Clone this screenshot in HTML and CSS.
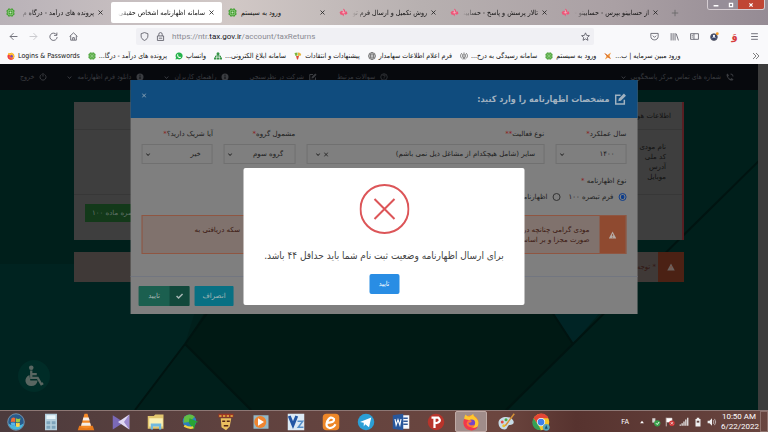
FILE: index.html
```html
<!DOCTYPE html>
<html lang="fa">
<head>
    <meta charset="UTF-8">
    <meta name="viewport" content="width=device-width, initial-scale=1.0">
    <title>سامانه اظهارنامه اشخاص حقیقی</title>
    <link rel="stylesheet" href="styles.css">
</head>
<body>
    <!-- Shared icons -->
    <svg class="sprite" aria-hidden="true">
        <symbol id="i-tax" viewBox="0 0 16 16">
            <path d="M4 1h3l1 1 1-1h3l1 2 2 1v3l-1 1 1 1v3l-2 1-1 2H9l-1-1-1 1H4l-1-2-2-1V9l1-1-1-1V4l2-1z" fill="#46a035"/>
            <rect x="4" y="4" width="8" height="8" rx="2" fill="none" stroke="#c4eab4"/>
            <path d="M6 8h4M8 6v4" stroke="#dff5d6"/>
        </symbol>
        <symbol id="i-hesab" viewBox="0 0 16 16">
            <path d="M8 1l3 3-1 2 4 0 1 4-3 2-3-2-1 5-2-3-3 0-2-4 3-3 3 1z" fill="#ee5578"/>
            <path d="M5 8l3 1 3-1M8 4v5" stroke="#ffd5df" fill="none"/>
        </symbol>
        <symbol id="i-x" viewBox="0 0 10 10"><path d="M1 1l8 8M9 1l-8 8" stroke="currentColor" stroke-width="1.6" fill="none"/></symbol>
        <symbol id="i-down" viewBox="0 0 10 10"><path d="M1.500 3l3.500 4 3.500-4" stroke="currentColor" stroke-width="2" fill="none"/></symbol>
        <symbol id="i-edit" viewBox="0 0 16 16">
            <path d="M13 9v5.500H1.500V3H8" fill="none" stroke="currentColor" stroke-width="2"/>
            <path d="M5 11l.6-3.400L12.500.8l2.700 2.700-6.800 6.900z" fill="currentColor"/>
        </symbol>
        <symbol id="i-info" viewBox="0 0 16 16">
            <circle cx="8" cy="8" r="7" fill="currentColor"/><path d="M8 7v5M8 3.500v2" stroke="#07090d" stroke-width="2"/>
        </symbol>
        <symbol id="i-warn" viewBox="0 0 16 16">
            <path d="M8 1l7.500 14H.5z" fill="currentColor"/><path d="M8 6v4M8 11.500v1.500" stroke="#8f4a30" stroke-width="1.6"/>
        </symbol>
        <symbol id="i-firefox" viewBox="0 0 24 24">
            <circle cx="12" cy="13" r="10" fill="#ff8a22"/>
            <path d="M3 8c0-3 1-5 2-6 1 2 3 3 5 3 3-2 4-3 5-4 0 3 2 4 4 6 3 3 4 8 1 12-3 4-9 5-13 2 7 1 11-3 10-8-1-4-6-5-9-3-2-1-4-1-5-2z" fill="#ffc72e"/>
            <path d="M3 8c-3 6 0 14 8 15 5 1 9-2 10-5-4 3-9 2-11-1-3-3-1-6 1-7-3-1-5-1-8-2z" fill="#f0384e"/>
            <circle cx="13" cy="13" r="4.500" fill="#7445c9"/>
            <path d="M8 10c2-1 4-1 5 1 0 2-3 2-5 2 1 3 5 5 9 2-3 5-10 5-11-1z" fill="#ff7139"/>
        </symbol>
    </svg>

    <header class="browser">
        <div class="tab-bar">
            <div class="tab">
                <svg class="fav"><use href="#i-tax"/></svg>
                <span class="tab-title" dir="rtl">پرونده های درآمد - درگاه م</span>
                <button class="tab-close" aria-label="بستن"><svg><use href="#i-x"/></svg></button>
            </div>
            <div class="tab active">
                <span class="tab-title" dir="rtl">سامانه اظهارنامه اشخاص حقیقی</span>
                <button class="tab-close" aria-label="بستن"><svg><use href="#i-x"/></svg></button>
            </div>
            <div class="tab">
                <svg class="fav"><use href="#i-tax"/></svg>
                <span class="tab-title start">ورود به سیستم</span>
                <button class="tab-close" aria-label="بستن"><svg><use href="#i-x"/></svg></button>
            </div>
            <div class="tab">
                <svg class="fav"><use href="#i-hesab"/></svg>
                <span class="tab-title" dir="rtl">روش تکمیل و ارسال فرم توافق</span>
                <button class="tab-close" aria-label="بستن"><svg><use href="#i-x"/></svg></button>
            </div>
            <div class="tab">
                <svg class="fav"><use href="#i-hesab"/></svg>
                <span class="tab-title" dir="rtl">تالار پرسش و پاسخ - حسابینو</span>
                <button class="tab-close" aria-label="بستن"><svg><use href="#i-x"/></svg></button>
            </div>
            <div class="tab">
                <svg class="fav"><use href="#i-hesab"/></svg>
                <span class="tab-title" dir="rtl">از حسابینو بپرس - حسابینو - ت</span>
                <button class="tab-close" aria-label="بستن"><svg><use href="#i-x"/></svg></button>
            </div>
            <button class="new-tab" aria-label="زبانه جدید"><svg viewBox="0 0 10 10"><path d="M5 1v8M1 5h8" stroke="#666" fill="none"/></svg></button>
            <div class="window-buttons">
                <button aria-label="کوچک کردن"><svg viewBox="0 0 10 8"><path d="M2 5h6" stroke="#fff" stroke-width="2"/></svg></button>
                <button aria-label="بزرگ کردن"><svg viewBox="0 0 10 8"><path d="M3 2h4v4H3z" stroke="#fff" stroke-width="1.500" fill="none"/></svg></button>
                <button class="close" aria-label="بستن پنجره"><svg viewBox="0 0 10 8"><path d="M3 2l4 4M7 2L3 6" stroke="#fff" stroke-width="1.500"/></svg></button>
            </div>
        </div>

        <div class="toolbar">
            <div class="nav-buttons">
                <button aria-label="عقب"><svg viewBox="0 0 16 16"><path d="M15 8H2M8 2L2 8l6 6"/></svg></button>
                <button class="off" aria-label="جلو"><svg viewBox="0 0 16 16"><path d="M1 8h13M8 2l6 6-6 6"/></svg></button>
                <button aria-label="بارگذاری"><svg viewBox="0 0 16 16"><path d="M13.500 5A6.500 6.500 0 1 0 14.500 9M14 1v5H9"/></svg></button>
                <button aria-label="خانه"><svg viewBox="0 0 16 16"><path d="M1 8l7-6.500L15 8M3 7v7.500h10V7M6.500 14v-4h3v4"/></svg></button>
            </div>
            <div class="url-bar">
                <svg viewBox="0 0 16 16"><path d="M8 1l6 2v4c0 4-2 6-6 8-4-2-6-4-6-8V3z"/></svg>
                <svg viewBox="0 0 16 16"><path d="M2.500 7h11v8h-11zM5 7V4a3 3 0 0 1 6 0v3M5 11h6"/></svg>
                <span class="url" role="textbox" aria-label="نشانی" dir="ltr">https://ntr.<b>tax.gov.ir</b>/account/taxReturns</span>
                <svg viewBox="0 0 16 16"><path d="M8 1.500l2 4.500 5 .5-3.700 3.300 1 5L8 12.300l-4.300 2.500 1-5L1 6.500 6 6z"/></svg>
            </div>
            <div class="tool-buttons">
                <button aria-label="Pocket"><svg viewBox="0 0 16 16"><path d="M1.500 2.500h13V8c0 8-13 8-13 0zM5 6.500l3 3 3-3"/></svg></button>
                <button aria-label="کتابخانه"><svg viewBox="0 0 16 16"><path d="M2 2v13M5.500 2v13M9 2v13M11 3l4 12"/></svg></button>
                <button aria-label="نوار کناری"><svg viewBox="0 0 16 16"><path d="M1 3h14v10H1zM7 3v10M3 6h2M3 9h2"/></svg></button>
                <button aria-label="حساب"><svg viewBox="0 0 16 16"><circle cx="7" cy="9" r="6" fill="#38456b"/><path d="M4 11c2-3 4-3 6 0" stroke="#fff"/><circle cx="7" cy="7" r="2" fill="#fff" stroke="none"/><circle cx="13" cy="3" r="2.500" fill="#f59b25" stroke="none"/></svg></button>
                <button class="vaw" aria-label="افزونه">وَ</button>
                <button aria-label="منو"><svg viewBox="0 0 16 16"><path d="M2 3h12M2 8h12M2 13h12"/></svg></button>
            </div>
        </div>

        <nav class="bookmarks">
            <div class="bookmark-list">
                <a href="#"><svg><use href="#i-firefox"/></svg><span>Logins &amp; Passwords</span></a>
                <a href="#"><svg><use href="#i-tax"/></svg><span dir="rtl">پرونده های درآمد - درگا...</span></a>
                <a href="#"><svg viewBox="0 0 16 16"><path d="M1 15l1-4A7 7 0 1 1 5 14z" fill="#25b34b"/><path d="M5 4l2 2-1 1c1 2 2 3 3 3l1-1 2 2c-3 4-10-3-7-7z" fill="#fff"/></svg><span>واتساپ</span></a>
                <a href="#"><svg viewBox="0 0 16 16"><path d="M8 5v4M3 11V8h10v3" stroke="#369447" stroke-width="2" fill="none"/><circle cx="8" cy="3.500" r="3" fill="#369447"/><path d="M0 11h5v4H0zM6 11h4v4H6zM11 11h5v4h-5z" fill="#369447"/></svg><span dir="rtl">سامانه ابلاغ الکترونی...</span></a>
                <a href="#"><svg viewBox="0 0 16 16"><path d="M1 2l6-1v6L3 8z" fill="#7db63b"/><path d="M8 1c5 0 7 3 6 6l-6 1z" fill="#e8b53e"/><path d="M4 8h6l-2 7H6z" fill="#dd4c3a"/></svg><span>پیشنهادات و انتقادات</span></a>
                <a href="#"><svg viewBox="0 0 16 16"><g fill="none" stroke="#555" stroke-width="1.300"><circle cx="8" cy="8" r="7"/><ellipse cx="8" cy="8" rx="3" ry="7"/><path d="M1 8h14M2 4.500h12M2 11.500h12"/></g></svg><span>فرم اعلام اطلاعات سهامدار</span></a>
                <a href="#"><svg viewBox="0 0 16 16"><path d="M4 2c-4 4-4 8 1 12M12 2c4 4 4 8-1 12M6 4c-2 4-1 7 2 9M10 4c2 4 1 7-2 9M8 1v14" fill="none" stroke="#555" stroke-width="1.500"/></svg><span dir="rtl">سامانه رسیدگی به درخ...</span></a>
                <a href="#"><svg><use href="#i-tax"/></svg><span>ورود به سیستم</span></a>
                <a href="#"><svg viewBox="0 0 16 16"><path d="M1 2l6 4 7-5-3 7 3 6-6-3-6 4 3-7z" fill="#f1993a"/><path d="M2 3l10 10" stroke="#cf5c32" stroke-width="2"/></svg><span dir="rtl">ورود مبین سرمایه | ب...</span></a>
            </div>
            <button class="more" aria-label="نشانک‌های بیشتر"><svg viewBox="0 0 16 16"><path d="M2 2l6 6-6 6M8 2l6 6-6 6" fill="none" stroke="#555" stroke-width="1.500"/></svg></button>
        </nav>
    </header>

    <main class="page" dir="rtl">
        <svg class="backdrop" viewBox="0 0 768 346" preserveAspectRatio="none" aria-hidden="true">
            <path d="M0 0h768v346H0z" fill="#001f1b"/>
            <path d="M0 200h210l-25 80-50 66H0z" fill="#002320"/>
            <path d="M210 240l-25 40 65 66h258l65-66-25-40z" fill="#001914"/>
            <path d="M550 245l23 35 30-35z" fill="#002425"/>
            <path d="M210 245l-25 35-50 66M185 280l66 66M550 245l23 35M506 346l67-66 195-192" fill="none" stroke="#001411" stroke-width="2"/>
        </svg>

        <nav class="site-nav">
            <a href="#"><svg viewBox="0 0 16 16"><path d="M3 1l3 4-2 2c1 3 2 4 5 5l2-2 4 3c-2 4-7 2-10-1S-1 3 3 1zM9 1c4 0 6 3 6 6l-2 0c0-2-1-4-4-4z" fill="currentColor"/></svg>شماره های تماس مرکز پاسخگویی<svg class="caret"><use href="#i-down"/></svg></a>
            <div class="site-links">
                <a href="#"><svg viewBox="0 0 16 16"><circle cx="8" cy="8" r="6.500" fill="none" stroke="currentColor" stroke-width="1.500"/><path d="M5.500 6c0-3 5-3 5 0 0 1.500-2.500 1.500-2.500 3.500M8 11v1.500" fill="none" stroke="currentColor" stroke-width="1.500"/></svg>سوالات مرتبط</a>
                <a href="#"><svg><use href="#i-edit"/></svg>شرکت در نظرسنجی</a>
                <a href="#"><svg><use href="#i-info"/></svg>راهنمای کاربران<svg class="caret"><use href="#i-down"/></svg></a>
                <a href="#"><svg><use href="#i-info"/></svg>دانلود فرم اظهارنامه<svg class="caret"><use href="#i-down"/></svg></a>
                <a href="#"><svg viewBox="0 0 16 16"><path d="M5 3a6 6 0 1 0 6 0M8 0v7" fill="none" stroke="currentColor" stroke-width="2"/></svg>خروج</a>
            </div>
        </nav>

        <section class="content">
            <div class="panel">
                <h3>اطلاعات هویتی</h3>
                <ul>
                    <li>نام مودی</li>
                    <li>کد ملی</li>
                    <li>آدرس</li>
                    <li>موبایل</li>
                </ul>
                <div class="panel-footer">
                    <button class="note-btn">فرم تبصره ماده ۱۰۰</button>
                </div>
            </div>
            <div class="notice">
                <span class="notice-icon"><svg><use href="#i-warn"/></svg></span>
                <p>* توجه</p>
            </div>
        </section>

        <button class="accessibility" aria-label="دسترسی‌پذیری">
            <svg viewBox="0 0 24 24"><circle cx="9" cy="3" r="2.500" fill="currentColor"/><path d="M9 6v8h7l4 7 2-1M9 10h6" fill="none" stroke="currentColor" stroke-width="2.500"/><path d="M7 11c-7 3-5 12 2 12 4 0 6-2 7-6H8z" fill="currentColor"/></svg>
        </button>

        <div class="scrollbar"></div>

        <form class="modal">
            <div class="modal-header">
                <svg><use href="#i-edit"/></svg>
                <h2>مشخصات اظهارنامه را وارد کنید:</h2>
                <button type="button" class="modal-close" aria-label="بستن"><svg><use href="#i-x"/></svg></button>
            </div>
            <div class="modal-body">
                <div class="fields">
                    <div class="field">
                        <label for="year">سال عملکرد<i>*</i></label>
                        <div class="select-box"><select id="year"><option>۱۴۰۰</option></select><svg><use href="#i-down"/></svg></div>
                    </div>
                    <div class="field">
                        <label for="activity">نوع فعالیت<i>**</i></label>
                        <div class="select-box wide"><select id="activity"><option>سایر (شامل هیچکدام از مشاغل ذیل نمی باشم)</option></select><svg><use href="#i-x"/></svg><svg><use href="#i-down"/></svg></div>
                    </div>
                    <div class="field">
                        <label for="group">مشمول گروه<i>*</i></label>
                        <div class="select-box"><select id="group"><option>گروه سوم</option></select><svg><use href="#i-down"/></svg></div>
                    </div>
                    <div class="field">
                        <label for="partner">آیا شریک دارید؟<i>*</i></label>
                        <div class="select-box"><select id="partner"><option>خیر</option></select><svg><use href="#i-down"/></svg></div>
                    </div>
                </div>
                <fieldset class="kinds">
                    <legend>نوع اظهارنامه <i>*</i></legend>
                    <div class="kind-list">
                        <label><input type="radio" name="kind" checked>فرم تبصره ۱۰۰</label>
                        <label><input type="radio" name="kind">اظهارنامه</label>
                    </div>
                </fieldset>
                <div class="alert">
                    <span class="alert-icon"><svg><use href="#i-warn"/></svg></span>
                    <div class="alert-text">
                        <p><span>مودی گرامی چنانچه در</span><span>سکه دریافتی به</span></p>
                        <p>صورت مجزا و بر اساس</p>
                    </div>
                </div>
            </div>
            <div class="modal-footer">
                <button type="button" class="btn-cancel">انصراف</button>
                <button type="button" class="btn-submit"><span class="check"><svg viewBox="0 0 16 16"><path d="M2 8l4 4 8-8" fill="none" stroke="currentColor" stroke-width="3"/></svg></span><span class="btn-label">تایید</span></button>
            </div>
        </form>

        <div class="dialog" role="alertdialog" aria-labelledby="dialog-text">
            <svg class="error-icon" viewBox="0 0 50 50"><circle cx="25" cy="25" r="24"/><path d="M15 15l20 20M35 15L15 35"/></svg>
            <p id="dialog-text">برای ارسال اظهارنامه وضعیت ثبت نام شما باید حداقل ۴۴ باشد.</p>
            <button class="dialog-ok">تایید</button>
        </div>
    </main>

    <footer class="taskbar">
        <div class="apps">
            <button aria-label="Start"><svg viewBox="0 0 24 24"><circle cx="12" cy="12" r="11" fill="#285b8c" stroke="#86a9c2"/><path d="M2 14c5 4 15 4 20 0-2 11-18 11-20 0z" fill="#49b6dd"/><path d="M6 7q3-2 5 0v5q-3-1-6 0z" fill="#ee6b36"/><path d="M12 7q3 2 6 0l-1 5q-3 1-5 0z" fill="#9ccd45"/><path d="M5 13q3-1 6 0v5q-2-2-5-1z" fill="#58b5ec"/><path d="M12 13q2 1 5 0v5q-3 1-5 0z" fill="#ffd54a"/></svg></button>
            <button aria-label="Calculator"><svg viewBox="0 0 24 24"><path d="M4 1h16v22H4z" fill="#b4cfdd"/><path d="M6 3h12v5H6z" fill="#e9f6fb"/><path d="M6 11h5v4H6zM6 17h5v4H6zM13 11h5v4h-5zM13 17h5v4h-5z" fill="#7da4bc"/></svg></button>
            <button aria-label="VLC"><svg viewBox="0 0 24 24"><path d="M3 17h18l2 6H1z" fill="#e77a1c"/><path d="M10 1h4l5 18q-7 3-14 0z" fill="#f58a27"/><path d="M8.500 6h7l1.500 4H7.500zM6.500 13h11l1 4h-13z" fill="#f4eee8"/></svg></button>
            <button aria-label="Visual Studio"><svg viewBox="0 0 24 24"><path d="M1 3l11 7v5L1 22z" fill="#7a69b8"/><path d="M23 2v20L8 12z" fill="#e0d9f2"/><path d="M23 2v20l-7-10z" fill="#9d8ace"/></svg></button>
            <button aria-label="Explorer"><svg viewBox="0 0 24 24"><path d="M1 4h8l2-2h11v19H1z" fill="#e3c66f"/><path d="M3 7h18v11H3z" fill="#fbf0b5"/><path d="M5 14h14v8h-3v-4H8v4H5z" fill="#72b9de"/></svg></button>
            <button aria-label="Download Manager"><svg viewBox="0 0 24 24"><circle cx="10" cy="11" r="9" fill="#2c7fc0"/><path d="M3 5q8-6 14 0l-7 7-8 1z" fill="#62be43"/><path d="M10 7l12 5-4 1-2 9-7-9z" fill="#28a336"/><path d="M3 17q7 4 12 2" stroke="#f1d240" stroke-width="3" fill="none"/></svg></button>
            <button aria-label="Game"><svg viewBox="0 0 24 24"><path d="M2 1h20v5H2z" fill="#9d3524"/><path d="M3 4h18" stroke="#eabb43" stroke-width="2" stroke-dasharray="3 2"/><path d="M5 7h14l-2 11-5 5-6-4z" fill="#eabf5f"/><path d="M7 11h4M13 11h4M9 17h6" stroke="#532516" stroke-width="2"/></svg></button>
            <button aria-label="Media Player"><svg viewBox="0 0 24 24"><path d="M2 3h20v18H2z" fill="#93b8c8"/><circle cx="11" cy="12" r="8" fill="#ee8430"/><path d="M8 7l8 5-8 5z" fill="#fff"/></svg></button>
            <button aria-label="V2"><svg viewBox="0 0 24 24"><path d="M1 1h22v22H1z" fill="#dce9f4"/><path d="M3 4l5 12 5-12" fill="none" stroke="#2356a4" stroke-width="4"/><path d="M14 11h7l-6 8h7" fill="none" stroke="#568fc9" stroke-width="2"/></svg></button>
            <button aria-label="e"><svg viewBox="0 0 24 24"><rect x="1" y="1" width="22" height="22" rx="5" fill="#ee8728"/><path d="M7 13q10 0 9-5-5-5-9 3-3 8 3 9 5 0 8-5" fill="none" stroke="#fff" stroke-width="3"/></svg></button>
            <button aria-label="Telegram"><svg viewBox="0 0 24 24"><circle cx="12" cy="12" r="11" fill="#2b9fd6"/><path d="M4 12l15-6-3 13-5-4-2 3v-5z" fill="#fff"/></svg></button>
            <button aria-label="Word"><svg viewBox="0 0 24 24"><path d="M12 3h11v18H12z" fill="#f6f8fc"/><path d="M15 7h6M15 11h6M15 15h6" stroke="#305999" stroke-width="2"/><path d="M1 3l14-2v22L1 21z" fill="#28579c"/><path d="M4 8l1.500 8L8 9l2.500 7L12 8" fill="none" stroke="#fff" stroke-width="1.500"/></svg></button>
            <button aria-label="Psiphon"><svg viewBox="0 0 24 24"><circle cx="12" cy="12" r="11" fill="#b8342b"/><path d="M10 20V6h5q6 6-5 8M6 6h4" fill="none" stroke="#fff" stroke-width="3"/></svg></button>
            <button class="running" aria-label="Firefox"><svg><use href="#i-firefox"/></svg></button>
            <button aria-label="Paint"><svg viewBox="0 0 24 24"><path d="M2 13C2 5 15 3 20 8s1 8-3 8-2 6-7 6-8-4-8-9z" fill="#c7dce7"/><circle cx="7" cy="12" r="2" fill="#e44b40"/><circle cx="12" cy="9" r="2" fill="#48ad4a"/><circle cx="9" cy="17" r="2" fill="#ecc12c"/><path d="M23 1L11 17" stroke="#d59238" stroke-width="2"/></svg></button>
            <button aria-label="Chrome"><svg viewBox="0 0 24 24"><circle cx="12" cy="12" r="11" fill="#f4c52b"/><path d="M2 7C7-2 19-1 22 7H12L8 15z" fill="#e34535"/><path d="M2 7l7 10 3 6C2 23-2 14 2 7z" fill="#36a054"/><circle cx="12" cy="12" r="5.500" fill="#fff"/><circle cx="12" cy="12" r="4.500" fill="#3e80ea"/><circle cx="19" cy="19" r="4.500" fill="#56a6bb"/><path d="M17 21l2-5 2 5z" fill="#184f68"/></svg></button>
        </div>
        <div class="tray">
            <span class="lang">FA</span>
            <svg viewBox="0 0 16 16"><path d="M5 10l3-4 3 4z" fill="#fff"/></svg>
            <svg viewBox="0 0 16 16"><path d="M2 2h5v7H2z" fill="#d6d4d2"/><circle cx="10" cy="10" r="5" fill="#38a24b"/><path d="M8 10l2 2 3-4" stroke="#fff" fill="none" stroke-width="1.500"/></svg>
            <svg viewBox="0 0 16 16"><path d="M2 1v14M3 2h8v6H3z" fill="#fff" stroke="#fff"/><circle cx="11" cy="10" r="4.500" fill="#cf3737"/><path d="M9 8l4 4M13 8l-4 4" stroke="#fff"/></svg>
            <svg viewBox="0 0 16 16"><path d="M1 12h2v2H1zM4 10h2v4H4zM7 7h2v7H7zM10 4h2v10h-2zM13 1h2v13h-2z" fill="#eee"/></svg>
            <svg viewBox="0 0 16 16"><path d="M6 1h4v2h2v12H4V3h2z" fill="#eee"/><path d="M6 6h4v3H6z" fill="#624642"/></svg>
            <svg viewBox="0 0 16 16"><path d="M1 6h3l4-4v12l-4-4H1z" fill="#eee"/><path d="M10 5q2 3 0 6M12 3q4 5 0 10" stroke="#eee" fill="none"/></svg>
            <time class="clock">10:50 AM<br>6/22/2022</time>
        </div>
        <button class="show-desktop" aria-label="Show desktop"></button>
    </footer>
</body>
</html>
```
FILE: styles.css
```css
* {
    box-sizing: border-box;
}

body {
    display: flex;
    flex-direction: column;
    height: 100vh;
    margin: 0;
    overflow: hidden;
    font-family: "DejaVu Sans", sans-serif;
    font-size: 7px;
    color: #222;
}

button, select, input {
    margin: 0;
    padding: 0;
    border: none;
    background: none;
    font: inherit;
    color: inherit;
}

button {
    display: flex;
    align-items: center;
    justify-content: center;
    cursor: pointer;
}

a {
    color: inherit;
    text-decoration: none;
}

h2, h3, p, ul {
    margin: 0;
    padding: 0;
    list-style: none;
}

i {
    font-style: normal;
    color: #8c2020;
}

svg {
    flex: none;
    width: 8px;
    height: 8px;
}

.sprite {
    position: absolute;
    width: 0;
    height: 0;
}

.browser, .site-nav, .modal-header, .dialog {
    font-family: "DejaVu Sans Condensed", "DejaVu Sans", sans-serif;
}

/* Browser */
.tab-bar {
    display: flex;
    align-items: stretch;
    height: 25px;
    background: linear-gradient(to right, #b9b2b8, #d1c8c6 30%, #b7b0b0 55%, #aaa0a4 80%, #958b94);
}

.tab {
    display: flex;
    align-items: center;
    gap: 4px;
    flex: 0 1 111px;
    min-width: 0;
    padding: 0 8px 0 6px;
}

.tab.active {
    margin: 2px 0;
    border-radius: 2px;
    background: #fff;
}

.fav {
    width: 9px;
    height: 9px;
}

.tab-title {
    flex: 1;
    min-width: 0;
    overflow: hidden;
    white-space: nowrap;
    color: #111;
    -webkit-mask-image: linear-gradient(to right, transparent, #000 14px);
    mask-image: linear-gradient(to right, transparent, #000 14px);
}

.tab-title.start {
    -webkit-mask-image: none;
    mask-image: none;
}

.tab-close svg {
    width: 5px;
    height: 5px;
}

.new-tab {
    width: 18px;
}

.window-buttons {
    display: flex;
    height: 10px;
    margin: 0 3px 0 auto;
    border: 1px solid #d5cdd2;
    border-top: none;
    border-radius: 0 0 3px 3px;
    overflow: hidden;
}

.window-buttons button {
    width: 15px;
    background: #968e98;
}

.window-buttons .close {
    width: 26px;
    background: #c04634;
}

.toolbar {
    display: flex;
    align-items: center;
    height: 23px;
    padding: 0 9px;
    background: #f9f9fb;
}

.toolbar svg {
    width: 9px;
    height: 9px;
    fill: none;
    stroke: #5b5b66;
    stroke-width: 1.5;
}

.nav-buttons, .tool-buttons {
    display: flex;
    align-items: center;
    gap: 11px;
}

.off {
    opacity: 0.35;
}

.url-bar {
    display: flex;
    align-items: center;
    gap: 7px;
    flex: 1;
    height: 17px;
    margin: 0 56px 0 58px;
    padding: 0 4px;
    border-radius: 2px;
    background: #f0f0f4;
}

.url {
    flex: 1;
    font-family: Roboto, sans-serif;
    font-size: 8px;
    color: #8a8a92;
}

.url b {
    font-weight: normal;
    color: #15141a;
}

.vaw {
    width: 9px;
    font-size: 11px;
    line-height: 12px;
    font-weight: bold;
    color: #d73c3c;
}

.bookmarks {
    display: flex;
    align-items: center;
    justify-content: space-between;
    height: 16px;
    padding: 0 8px 0 7px;
    background: #f9f9fb;
    color: #111;
}

.bookmark-list {
    display: flex;
    gap: 8px;
}

.bookmark-list a {
    display: flex;
    align-items: center;
    gap: 3px;
    white-space: nowrap;
}

/* Tax site */
.page {
    position: relative;
    flex: 1;
    min-height: 0;
    overflow: hidden;
    background: #001f1b;
}

.backdrop {
    position: absolute;
    top: 0;
    left: 0;
    width: 100%;
    height: 100%;
}

.site-nav {
    position: relative;
    display: flex;
    align-items: center;
    justify-content: space-between;
    height: 26px;
    padding: 0 34px 0 20px;
    background: #07090d;
    color: #3a3c40;
}

.site-nav a, .site-links {
    display: flex;
    align-items: center;
    gap: 5px;
    white-space: nowrap;
}

.site-links {
    gap: 20px;
}

.site-nav .caret {
    width: 5px;
    height: 5px;
}

.content {
    position: relative;
    padding: 12px 84px 0 74px;
    color: #111;
}

.panel {
    border-right: 2px solid #571f23;
    background: #3e3e3e;
}

.panel h3 {
    padding: 9px 11px 7px;
    border-bottom: 1px solid #373737;
    font-size: 7px;
    line-height: 11px;
    font-weight: normal;
}

.panel ul {
    height: 64px;
    padding: 12px 16px;
    line-height: 10px;
}

.panel-footer {
    display: flex;
    justify-content: flex-end;
    height: 46px;
    padding: 9px 11px;
    border-top: 1px solid #373737;
}

.note-btn {
    height: 18px;
    padding: 0 7px;
    background: #13391a;
    color: #62736a;
}

.notice {
    display: flex;
    align-items: stretch;
    height: 30px;
    margin-top: 12px;
    background: #3f3937;
    color: #321612;
}

.notice-icon {
    display: flex;
    align-items: center;
    justify-content: center;
    width: 26px;
    background: #4b2114;
    color: #6b625f;
}

.notice p {
    padding: 0 2px;
    line-height: 30px;
}

.accessibility {
    position: absolute;
    left: 18px;
    bottom: 18px;
    width: 32px;
    height: 32px;
    border-radius: 50%;
    background: #002c27;
    color: #596661;
}

.accessibility svg {
    width: 22px;
    height: 22px;
}

.scrollbar {
    position: absolute;
    top: 0;
    right: 0;
    width: 10px;
    height: 100%;
    background: #3c3c3c;
}

/* Tax return form */
.modal {
    position: absolute;
    top: 16px;
    left: 50%;
    width: 66%;
    transform: translateX(-50%);
    background: #7f7f7f;
    color: #1c1c1c;
}

.modal-header {
    display: flex;
    align-items: center;
    gap: 5px;
    height: 38px;
    padding: 0 11px;
    background: #104c7e;
    color: #a2b2c0;
}

.modal-header > svg {
    width: 12px;
    height: 12px;
}

.modal-header h2 {
    flex: 1;
    font-size: 9px;
}

.modal-close {
    align-self: flex-start;
    margin-top: 13px;
}

.modal-close svg {
    width: 5px;
    height: 5px;
}

.modal-body {
    padding: 10px 11px 22px;
}

.fields {
    display: grid;
    grid-template-columns: 3fr 10fr 3fr 3fr;
    gap: 11px;
}

.field {
    min-width: 0;
}

.field label {
    display: block;
    height: 16px;
    line-height: 12px;
    white-space: nowrap;
}

.select-box {
    display: flex;
    align-items: center;
    gap: 3px;
    height: 20px;
    padding: 0 11px 0 3px;
    border: 1px solid #707070;
}

.select-box.wide {
    padding: 0 8px;
}

.select-box select {
    flex: 1;
    min-width: 0;
    appearance: none;
}

.select-box svg {
    width: 5px;
    height: 5px;
}

.kinds {
    margin: 10px 0 0;
    padding: 0;
    border: none;
}

.kinds legend {
    padding: 0;
    line-height: 14px;
}

.kind-list {
    display: flex;
    gap: 8px;
    margin-top: 2px;
}

.kind-list label {
    display: flex;
    align-items: center;
    gap: 5px;
    height: 14px;
    white-space: nowrap;
}

.kind-list input {
    width: 8px;
    height: 8px;
    border: 1px solid #333;
    border-radius: 50%;
    appearance: none;
}

.kind-list input:checked {
    border-color: #0d3d8c;
    background: radial-gradient(#0d3d8c 40%, transparent 50%);
}

.alert {
    display: flex;
    height: 39px;
    margin-top: 11px;
    border: 1px solid #8f5642;
    background: #80726d;
}

.alert-icon {
    display: flex;
    align-items: center;
    justify-content: center;
    width: 26px;
    background: #8f4a30;
    color: #b5aaa5;
}

.alert-text {
    flex: 1;
    padding: 9px 10px 0 52px;
    line-height: 10px;
    color: #3a1710;
}

.alert-text p {
    display: flex;
    justify-content: space-between;
}

.modal-footer {
    display: flex;
    justify-content: flex-end;
    gap: 5px;
    padding: 9px 8px 8px;
    border-top: 1px solid #727680;
}

.modal-footer button {
    height: 20px;
    border-radius: 1px;
    color: #a9b8b6;
}

.btn-cancel {
    width: 39px;
    background: #087083;
}

.btn-submit {
    width: 51px;
    background: #1b5f4f;
    overflow: hidden;
}

.check {
    display: flex;
    align-items: center;
    justify-content: center;
    width: 20px;
    height: 100%;
    background: #12483b;
}

.btn-label {
    flex: 1;
}

/* Error dialog */
.dialog {
    position: absolute;
    top: 104px;
    left: 50%;
    display: flex;
    flex-direction: column;
    align-items: center;
    width: 281px;
    padding: 16px 10px 11px;
    border-radius: 2px;
    transform: translateX(-50%);
    background: #fff;
    color: #444;
}

.error-icon {
    width: 50px;
    height: 50px;
    fill: none;
    stroke: #dc5558;
    stroke-width: 2;
}

.dialog p {
    margin: 13px 0 10px;
    font-size: 10px;
    line-height: 17px;
    white-space: nowrap;
}

.dialog-ok {
    width: 30px;
    height: 20px;
    border-radius: 2px;
    background: #298de4;
    color: #fff;
}

/* Windows taskbar */
.taskbar {
    display: flex;
    align-items: stretch;
    height: 22px;
    border-top: 1px solid #8d7774;
    background: linear-gradient(to right, #4c3b3d, #5f423f 30%, #6c463f 65%, #57332f 75%, #694640);
    font-family: Roboto, sans-serif;
    color: #fff;
}

.apps {
    display: flex;
    gap: 3px;
}

.apps button {
    width: 32px;
}

.apps svg {
    width: 18px;
    height: 18px;
}

.apps .running {
    border: 1px solid #c0aaa6;
    border-radius: 2px;
    background: #a08c8a;
}

.tray {
    display: flex;
    align-items: center;
    gap: 4px;
    margin-left: auto;
    padding-right: 3px;
}

.tray svg {
    width: 10px;
    height: 10px;
}

.lang {
    margin-right: 4px;
}

.clock {
    width: 36px;
    font-size: 8px;
    line-height: 10px;
    text-align: center;
}

.show-desktop {
    width: 8px;
    border: 1px solid #8d706b;
}
```
